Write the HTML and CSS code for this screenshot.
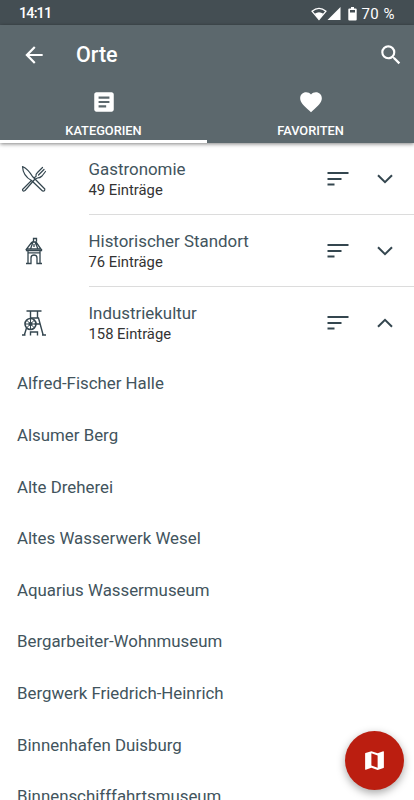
FILE: index.html
```
<!DOCTYPE html>
<html lang="de">

<head>
    <meta charset="utf-8">
    <meta name="viewport" content="width=device-width, initial-scale=1">
    <title>Orte</title>
    <link rel="stylesheet" href="styles.css">
</head>

<body>
    <div class="statusbar">
        <span class="time">14:11</span>
        <div class="status-icons">
            <svg width="16" height="14" viewBox="0 0 16 14">
                <path d="M1 4.200Q8-1.600 15 4.200L8 12.600Z" fill="none" stroke="#fff" stroke-width="1.300" />
                <path d="M3.600 6.800Q8 3.800 12.400 6.800L8 12.500Z" fill="#fff" />
            </svg>
            <svg width="14" height="14" viewBox="0 0 14 14">
                <path d="M13.500 0V13H.500Z" fill="#fff" />
            </svg>
            <svg class="battery" width="9" height="14" viewBox="0 0 9 14">
                <path d="M3 0h3v1.500h1.700q1 0 1 1V12.500q0 1-1 1H1.300q-1 0-1-1V2.500q0-1 1-1H3Z" fill="#fff" />
                <path d="M2 3h5v2.500H2Z" fill="#444e53" />
            </svg>
            <span class="percent">70 %</span>
        </div>
    </div>

    <header class="header">
        <div class="toolbar">
            <svg width="26" height="26" viewBox="0 0 24 24" fill="#fff">
                <path d="M20 11H7.830l5.590-5.590L12 4l-8 8 8 8 1.410-1.410L7.830 13H20v-2z" />
            </svg>
            <h1 class="title">Orte</h1>
            <svg class="search" width="26" height="26" viewBox="0 0 24 24" fill="#fff">
                <path d="M15.500 14h-.790l-.280-.270A6.471 6.471 0 0 0 16 9.500 6.500 6.500 0 1 0 9.500 16c1.610 0 3.090-.590 4.230-1.570l.270.280v.790l5 4.990L20.490 19l-4.990-5zm-6 0C7.010 14 5 11.990 5 9.500S7.010 5 9.500 5 14 7.010 14 9.500 11.990 14 9.500 14z" />
            </svg>
        </div>
        <nav class="tabs">
            <div class="tab active">
                <svg width="26" height="26" viewBox="0 0 24 24" fill="#fff">
                    <path d="M19 3H5c-1.100 0-2 .900-2 2v14c0 1.100.900 2 2 2h14c1.100 0 2-.900 2-2V5c0-1.100-.900-2-2-2zm-5 14H7v-2h7v2zm3-4H7v-2h10v2zm0-4H7V7h10v2z" />
                </svg>
                <span class="tab-label">KATEGORIEN</span>
            </div>
            <div class="tab">
                <svg width="26" height="26" viewBox="0 0 24 24" fill="#fff">
                    <path d="M12 21.350l-1.450-1.320C5.400 15.360 2 12.280 2 8.500 2 5.420 4.420 3 7.500 3c1.740 0 3.410.810 4.500 2.090C13.090 3.810 14.760 3 16.500 3 19.580 3 22 5.420 22 8.500c0 3.780-3.400 6.860-8.550 11.540L12 21.350z" />
                </svg>
                <span class="tab-label">FAVORITEN</span>
            </div>
        </nav>
    </header>

    <main>
        <section class="category">
            <div class="category-icon">
                <svg width="26" height="28" viewBox="0 0 26 28" fill="none" stroke="#34464f" stroke-width="1.200" stroke-linejoin="round" stroke-linecap="round">
                    <path d="M1.500 1.500Q7 4 11.500 11.500L23.800 24Q24 26.500 21.500 26L10.500 15.500Q2 11 1.500 1.500Z" />
                    <path d="M14 14L4 25.500Q1.500 27 1.500 24.500L10.500 15.500M13.500 12.500L15 11.500Q14.500 9 16.500 7.500L21.500 2.500M14.500 14L16.500 13Q19 13 21 11L24.500 6.500M17.500 10L23 4.500" />
                </svg>
            </div>
            <div class="category-body">
                <div class="category-text">
                    <h2 class="name">Gastronomie</h2>
                    <p class="count">49 Einträge</p>
                </div>
                <svg class="sort" width="22" height="16" viewBox="0 0 22 16" fill="#34464f">
                    <path d="M.500 1h21v2H.500zM.500 7h14v2H.500zM.500 12.600h7v2H.500z" />
                </svg>
                <svg class="chevron" width="16" height="10" viewBox="0 0 16 10">
                    <path d="M1 1.200L8 8.200L15 1.200" />
                </svg>
            </div>
        </section>

        <section class="category">
            <div class="category-icon">
                <svg width="26" height="28" viewBox="0 0 26 28" fill="none" stroke="#34464f" stroke-width="1.300">
                    <path d="M12.500 5V1.500H15.500V4.500M11 5H15L20 12H5.500L11 5M12 5L9.500 12M14 5L17 12M13 7V10" />
                    <path d="M5.500 12V13.500H20.500V12M7 14V26.500M19 14V26.500M7.500 15.800H18.500M5 26.500H10V21Q10 18 13 18Q16 18 16 21V26.500H21" />
                </svg>
            </div>
            <div class="category-body">
                <div class="category-text">
                    <h2 class="name">Historischer Standort</h2>
                    <p class="count">76 Einträge</p>
                </div>
                <svg class="sort" width="22" height="16" viewBox="0 0 22 16" fill="#34464f">
                    <path d="M.500 1h21v2H.500zM.500 7h14v2H.500zM.500 12.600h7v2H.500z" />
                </svg>
                <svg class="chevron" width="16" height="10" viewBox="0 0 16 10">
                    <path d="M1 1.200L8 8.200L15 1.200" />
                </svg>
            </div>
        </section>

        <section class="category open">
            <div class="category-icon">
                <svg width="26" height="28" viewBox="0 0 26 28" fill="none" stroke="#34464f" stroke-width="1.400">
                    <path d="M5.500 2H20.500M9.500 2V9M16.500 2V9M9 9H17.500L22 25.500M13.500 15H18.500M5.500 19L3.500 25.500M1 26H4.500M21 26H25M9.500 26.500V23H16.500V26.500" />
                    <circle cx="9.500" cy="15" r="5.500" stroke-width="1.600" />
                    <path d="M9.500 9.500V20.500M4 15H15M5.700 11.200L13.300 18.800M13.300 11.200L5.700 18.800" stroke-width="1" />
                    <circle cx="9.500" cy="15" r="1.400" fill="#34464f" />
                </svg>
            </div>
            <div class="category-body">
                <div class="category-text">
                    <h2 class="name">Industriekultur</h2>
                    <p class="count">158 Einträge</p>
                </div>
                <svg class="sort" width="22" height="16" viewBox="0 0 22 16" fill="#34464f">
                    <path d="M.500 1h21v2H.500zM.500 7h14v2H.500zM.500 12.600h7v2H.500z" />
                </svg>
                <svg class="chevron" width="16" height="10" viewBox="0 0 16 10">
                    <path d="M1 8.800L8 1.800L15 8.800" />
                </svg>
            </div>
        </section>

        <ul class="places">
            <li>Alfred-Fischer Halle</li>
            <li>Alsumer Berg</li>
            <li>Alte Dreherei</li>
            <li>Altes Wasserwerk Wesel</li>
            <li>Aquarius Wassermuseum</li>
            <li>Bergarbeiter-Wohnmuseum</li>
            <li>Bergwerk Friedrich-Heinrich</li>
            <li>Binnenhafen Duisburg</li>
            <li>Binnenschifffahrtsmuseum</li>
        </ul>
    </main>

    <button class="map-button" aria-label="Karte">
        <svg width="25" height="25" viewBox="0 0 24 24" fill="#fff">
            <path d="M20.500 3l-.160.030L15 5.100 9 3 3.360 4.900c-.210.070-.360.250-.360.480V20.500c0 .280.220.500.500.500l.160-.030L9 18.900l6 2.100 5.640-1.900c.210-.070.360-.250.360-.480V3.500c0-.280-.220-.500-.500-.500zM15 19l-6-2.110V5l6 2.110V19z" />
        </svg>
    </button>
</body>

</html>
```
FILE: styles.css
```
* {
    box-sizing: border-box;
}

body {
    margin: 0;
    height: 800px;
    overflow: hidden;
    background-color: #fff;
    font-family: Roboto, sans-serif;
}

svg {
    display: block;
    flex-shrink: 0;
}

.statusbar {
    display: flex;
    justify-content: space-between;
    align-items: center;
    height: 25px;
    padding: 2px 19px 0 19px;
    background-color: #444e53;
    color: #fff;
    font-size: 15px;
    font-weight: 500;
}

.time {
    font-size: 14.5px;
    letter-spacing: -0.9px;
}

.status-icons {
    display: flex;
    align-items: center;
}

.battery {
    margin-left: 7px;
}

.percent {
    margin-left: 4px;
    letter-spacing: 0.5px;
    font-weight: 400;
}

.header {
    position: relative;
    height: 118px;
    background-color: #5c686d;
    color: #fff;
    box-shadow: 0 1px 4px rgba(0, 0, 0, 0.5);
}

.toolbar {
    display: flex;
    align-items: center;
    height: 59px;
    padding: 0 10px 0 21px;
}

.title {
    margin: 0 0 0 29px;
    font-size: 21.5px;
    font-weight: 500;
}

.search {
    margin-left: auto;
}

.tabs {
    display: flex;
    height: 59px;
}

.tab {
    display: flex;
    flex-direction: column;
    align-items: center;
    width: 207px;
    padding-top: 5px;
}

.active {
    border-bottom: 3px solid #fff;
}

.tab-label {
    margin-top: 8px;
    font-size: 12.8px;
    line-height: 16px;
    font-weight: 500;
}

.category {
    display: flex;
    height: 72px;
}

.category-icon {
    width: 88.5px;
    padding: 22px 0 0 21px;
}

.category-body {
    display: flex;
    flex: 1;
    border-bottom: 1px solid #dcdcdc;
}

.open .category-body {
    border-bottom: none;
}

.category-text {
    flex: 1;
    padding-top: 16px;
}

.name {
    margin: 0;
    color: #42545d;
    font-size: 16.9px;
    line-height: 21px;
    font-weight: 400;
}

.count {
    margin: 0;
    color: #333;
    font-size: 14.8px;
    line-height: 20px;
}

.sort {
    margin-top: 28px;
}

.chevron {
    margin: 31px 21px 0 28px;
    fill: none;
    stroke: #34464f;
    stroke-width: 2;
}

.places {
    margin: 0;
    padding: 0.4px 0 0 17px;
    list-style: none;
}

.places li {
    height: 51.6px;
    color: #42545d;
    font-size: 16.85px;
    line-height: 49px;
}

.map-button {
    position: fixed;
    right: 10px;
    bottom: 10px;
    display: flex;
    justify-content: center;
    align-items: center;
    width: 59px;
    height: 59px;
    border: none;
    border-radius: 50%;
    background-color: #bb1e10;
    box-shadow: 0 3px 8px rgba(0, 0, 0, 0.35);
}
```
